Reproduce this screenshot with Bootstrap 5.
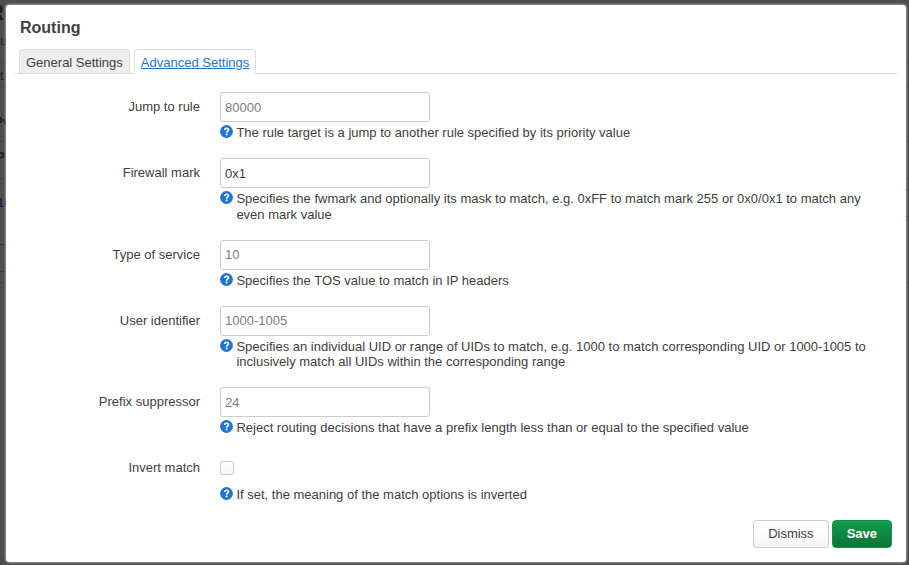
<!DOCTYPE html>
<html lang="en">
<head>
<meta charset="utf-8">
<title>Routing</title>
<link href="https://cdn.jsdelivr.net/npm/bootstrap@5.3.0/dist/css/bootstrap.min.css" rel="stylesheet">
<style>
html, body { height: 100%; }
body { font-family: "Liberation Sans", Arial, sans-serif; font-size: 13px; line-height: 15.5px; color: #404040; background: #4d4d4d; overflow: hidden; }
.page-behind { position: absolute; inset: 0; overflow: hidden; white-space: nowrap; color: #1c1c1c; }
.page-behind > * { position: absolute; left: 0; }
.rule-line { height: 1px; width: 100%; background: #444; }
.edge-green { width: 8px; height: 1px; background: #0c5a2c; }
.page-behind .edge-red { left: auto; right: 0; width: 3px; height: 1px; background: #7c1c20; }
.page-behind .heading-edge { left: -12px; top: 0; font-size: 22px; line-height: 26px; }
.dialog { position: relative; margin: 5px 3px 3px 6px; height: 557px; border-radius: 3px; background: #fff; box-shadow: 0 0 3px #ddd; padding: 13px 14px 14px; }
.dialog h4 { font-size: 16px; line-height: 20px; font-weight: 700; margin: 0 0 11px; }
.settings-tabs { margin: 0 -5px 18px; padding-left: 4px; border-bottom: 1px solid #ddd; gap: 4px; }
.settings-tabs .nav-link { color: #404040; background: #eee; border: 1px solid #ddd; border-radius: 4px 4px 0 0; height: 25px; padding: 5px 6px 0; line-height: 16px; margin-bottom: -1px; border-bottom-color: #ddd; }
.settings-tabs .nav-link.active { color: #1f75d1; background: #fff; border-color: #ddd #ddd #fff; text-decoration: underline; }
.field-label { width: 180px; text-align: right; padding-top: 7px; line-height: 16px; flex: none; }
.field-row { gap: 20px; min-height: 66px; }
.field-row.tall { min-height: 81.5px; }
.field-body { width: 654px; }
.dialog .form-control { width: 210px; height: 30px; padding: 1px 4px; font-size: 13px; line-height: 18px; border: 1px solid #ccc; border-radius: 3px; color: #404040; }
.dialog .form-control::placeholder { color: #7d7d7d; }
.hint { margin-top: 3px; gap: 3.4px; }
.hint svg { width: 13px; height: 13px; flex: none; }
.dialog .form-check-input { width: 14px; height: 14px; display: block; margin: 8px 0 12px; border: 1px solid #ccc; border-radius: 2px; background: linear-gradient(#fff, #f4f4f4); }
.dialog-actions { position: absolute; right: 14px; bottom: 14px; gap: 3px; }
.dialog-actions .btn { height: 28px; font-size: 13px; line-height: 18px; padding: 4px 14px; border-radius: 4px; }
.btn-dismiss { color: #404040; border-color: #ccc; background: linear-gradient(#fff 25%, #f5f5f5); }
.btn-save { color: #fff; font-weight: 700; border-color: #119248; background: linear-gradient(#149c4d, #0b7437); }
</style>
</head>
<body>
<div class="page-behind" aria-hidden="true">
  <div class="heading-edge fw-bold">R</div>
  <div style="top:33px;left:-7px">ou</div>
  <div class="rule-line" style="top:62px"></div>
  <div style="top:68px">t</div>
  <div class="rule-line" style="top:86px"></div>
  <div class="fw-bold" style="top:114px;left:-6px">Pv</div>
  <div class="rule-line" style="top:141px"></div>
  <div class="fw-bold" style="top:149px;left:-4px">P</div>
  <div class="rule-line" style="top:178px"></div>
  <div style="top:195px;left:-3px;color:#171742">10</div>
  <div class="edge-green" style="top:244px"></div>
  <div class="edge-green" style="top:271px"></div>
  <div class="edge-red" style="top:189px"></div>
  <div class="edge-red" style="top:216px"></div>
  <div class="rule-line" style="top:282px"></div>
</div>
<svg class="d-none"><symbol id="help" viewBox="0 0 13 13"><circle cx="6.5" cy="6.5" r="6.4" fill="#1f75d1"/><path d="M4.7 5.1C4.7 2.6 8.5 2.7 8.5 4.9C8.5 6.2 6.6 6.2 6.6 7.7" fill="none" stroke="#fff" stroke-width="1.6"/><rect x="5.7" y="8.6" width="1.8" height="1.7" fill="#fff"/></symbol></svg>
<main class="dialog">
  <h4>Routing</h4>
  <ul class="nav nav-tabs settings-tabs">
    <li class="nav-item"><a class="nav-link" href="#">General Settings</a></li>
    <li class="nav-item"><a class="nav-link active" href="#">Advanced Settings</a></li>
  </ul>
  <form>
    <div class="field-row d-flex">
      <label class="field-label" for="jump">Jump to rule</label>
      <div class="field-body"><input id="jump" class="form-control" placeholder="80000">
        <div class="hint d-flex"><svg><use href="#help"/></svg><span>The rule target is a jump to another rule specified by its priority value</span></div></div>
    </div>
    <div class="field-row tall d-flex">
      <label class="field-label" for="fw">Firewall mark</label>
      <div class="field-body"><input id="fw" class="form-control" value="0x1">
        <div class="hint d-flex"><svg><use href="#help"/></svg><span>Specifies the fwmark and optionally its mask to match, e.g. 0xFF to match mark 255 or 0x0/0x1 to match any<br>even mark value</span></div></div>
    </div>
    <div class="field-row d-flex">
      <label class="field-label" for="tos">Type of service</label>
      <div class="field-body"><input id="tos" class="form-control" placeholder="10">
        <div class="hint d-flex"><svg><use href="#help"/></svg><span>Specifies the TOS value to match in IP headers</span></div></div>
    </div>
    <div class="field-row tall d-flex">
      <label class="field-label" for="uid">User identifier</label>
      <div class="field-body"><input id="uid" class="form-control" placeholder="1000-1005">
        <div class="hint d-flex"><svg><use href="#help"/></svg><span>Specifies an individual UID or range of UIDs to match, e.g. 1000 to match corresponding UID or 1000-1005 to<br>inclusively match all UIDs within the corresponding range</span></div></div>
    </div>
    <div class="field-row d-flex">
      <label class="field-label" for="prefix">Prefix suppressor</label>
      <div class="field-body"><input id="prefix" class="form-control" placeholder="24">
        <div class="hint d-flex"><svg><use href="#help"/></svg><span>Reject routing decisions that have a prefix length less than or equal to the specified value</span></div></div>
    </div>
    <div class="field-row d-flex">
      <label class="field-label" for="invert">Invert match</label>
      <div class="field-body"><input id="invert" type="checkbox" class="form-check-input">
        <div class="hint d-flex"><svg><use href="#help"/></svg><span>If set, the meaning of the match options is inverted</span></div></div>
    </div>
    <div class="dialog-actions d-flex">
      <button type="button" class="btn btn-dismiss">Dismiss</button>
      <button type="button" class="btn btn-save">Save</button>
    </div>
  </form>
</main>
<script src="https://cdn.jsdelivr.net/npm/bootstrap@5.3.0/dist/js/bootstrap.bundle.min.js"></script>
</body>
</html>
